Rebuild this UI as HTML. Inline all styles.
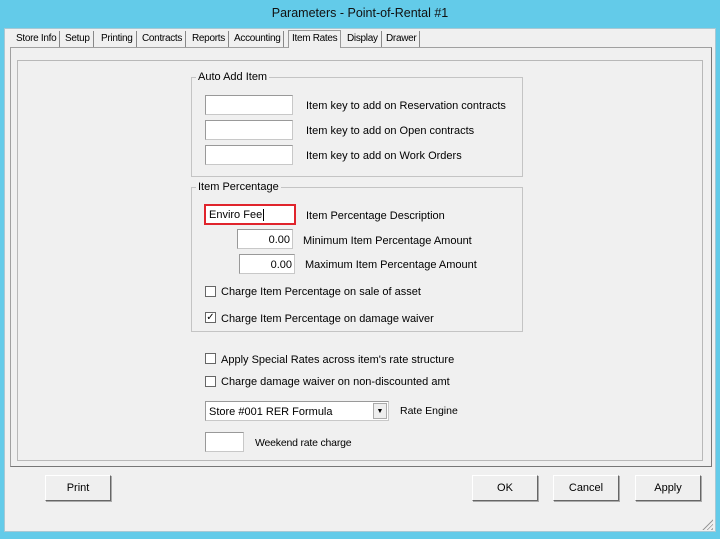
<!DOCTYPE html>
<html><head><style>
*{margin:0;padding:0;box-sizing:border-box}
body{width:720px;height:539px;background:#fff;position:relative;overflow:hidden;font-family:"Liberation Sans",sans-serif;font-size:11px;color:#000}
.a{position:absolute}
.win{left:0;top:0;width:720px;height:539px;background:#63cbe9}
.client{left:4px;top:28px;width:712px;height:504px;background:#f0f0f0;border:1px solid #a8c8d4}
.title{left:0;top:6px;width:720px;text-align:center;font-size:12.5px;color:#111}
.tab{top:31px;height:16px;font-size:10px;line-height:15px;padding:0 3px;border-right:1px solid #888;letter-spacing:-0.3px}
.panel{left:10px;top:47px;width:702px;height:420px;border:1px solid #a0a0a0;border-right-color:#777;border-bottom-color:#777}
.inner{left:17px;top:60px;width:686px;height:401px;border:1px solid #b8b8b8}
.grp{border:1px solid #c4c4c4}
.gl{background:#f0f0f0;padding:0 2px;font-size:11px}
.in{background:#fff;border:1px solid #c8c8c8;border-top-color:#999;border-left-color:#999}
.lbl{font-size:11px}
.cb{width:11px;height:11px;border:1px solid #666;background:#fff}
.btn{height:26px;background:#efefef;border:1px solid #fff;border-right-color:#666;border-bottom-color:#666;box-shadow:1px 1px 0 #aaa;text-align:center;line-height:24px;font-size:11px}
</style></head><body>
<div class="a win"></div>
<div class="a title">Parameters - Point-of-Rental #1</div>
<div class="a client"></div>
<div class="a panel"></div>
<div class="a tab" style="left:13px;border-left:none">Store Info</div>
<div class="a tab" style="left:62px">Setup</div>
<div class="a tab" style="left:98px">Printing</div>
<div class="a tab" style="left:139px">Contracts</div>
<div class="a tab" style="left:189px">Reports</div>
<div class="a tab" style="left:231px">Accounting</div>
<div class="a tab" style="left:288px;top:30px;height:18px;background:#f0f0f0;border:1px solid #999;border-bottom:none">Item Rates</div>
<div class="a tab" style="left:344px">Display</div>
<div class="a tab" style="left:383px">Drawer</div>
<div class="a inner"></div>

<div class="a grp" style="left:191px;top:77px;width:332px;height:100px"></div>
<div class="a gl" style="left:196px;top:71px">Auto Add Item</div>
<div class="a in" style="left:205px;top:95px;width:88px;height:20px"></div>
<div class="a in" style="left:205px;top:120px;width:88px;height:20px"></div>
<div class="a in" style="left:205px;top:145px;width:88px;height:20px"></div>
<div class="a lbl" style="left:306px;top:100px">Item key to add on Reservation contracts</div>
<div class="a lbl" style="left:306px;top:125px">Item key to add on Open contracts</div>
<div class="a lbl" style="left:306px;top:150px">Item key to add on Work Orders</div>

<div class="a grp" style="left:191px;top:187px;width:332px;height:145px"></div>
<div class="a gl" style="left:196px;top:181px">Item Percentage</div>
<div class="a" style="left:204px;top:204px;width:92px;height:21px;border:2px solid #e0242c;background:#fff;padding:3px 0 0 3px">Enviro Fee<span style="border-left:1px solid #000;margin-left:1px"></span></div>
<div class="a lbl" style="left:306px;top:210px">Item Percentage Description</div>
<div class="a in" style="left:237px;top:229px;width:56px;height:20px;text-align:right;padding:4px 2px 0 0">0.00</div>
<div class="a lbl" style="left:303px;top:235px">Minimum Item Percentage Amount</div>
<div class="a in" style="left:239px;top:254px;width:56px;height:20px;text-align:right;padding:4px 2px 0 0">0.00</div>
<div class="a lbl" style="left:305px;top:259px">Maximum Item Percentage Amount</div>
<div class="a cb" style="left:205px;top:286px"></div>
<div class="a lbl" style="left:221px;top:286px">Charge Item Percentage on sale of asset</div>
<div class="a cb" style="left:205px;top:312px;font-size:10px;line-height:9px;text-align:center">✓</div>
<div class="a lbl" style="left:221px;top:313px">Charge Item Percentage on damage waiver</div>

<div class="a cb" style="left:205px;top:353px"></div>
<div class="a lbl" style="left:221px;top:354px">Apply Special Rates across item's rate structure</div>
<div class="a cb" style="left:205px;top:376px"></div>
<div class="a lbl" style="left:221px;top:376px">Charge damage waiver on non-discounted amt</div>

<div class="a in" style="left:205px;top:401px;width:184px;height:20px;padding:4px 0 0 3px;font-size:11px">Store #001 RER Formula</div>
<div class="a" style="left:373px;top:403px;width:14px;height:16px;background:#eee;border:1px solid #aaa;font-size:7px;text-align:center;line-height:15px">▼</div>
<div class="a lbl" style="left:400px;top:405px;font-size:10.5px">Rate Engine</div>
<div class="a in" style="left:205px;top:432px;width:39px;height:20px"></div>
<div class="a lbl" style="left:255px;top:437px;font-size:10.5px;letter-spacing:-0.2px">Weekend rate charge</div>

<div class="a btn" style="left:45px;top:475px;width:66px">Print</div>
<div class="a btn" style="left:472px;top:475px;width:66px">OK</div>
<div class="a btn" style="left:553px;top:475px;width:66px">Cancel</div>
<div class="a btn" style="left:635px;top:475px;width:66px">Apply</div>
<div class="a" style="left:702px;top:519px;width:11px;height:11px;background:repeating-linear-gradient(135deg,transparent 0 2px,#999 2px 3px);clip-path:polygon(100% 0,100% 100%,0 100%)"></div>
</body></html>
